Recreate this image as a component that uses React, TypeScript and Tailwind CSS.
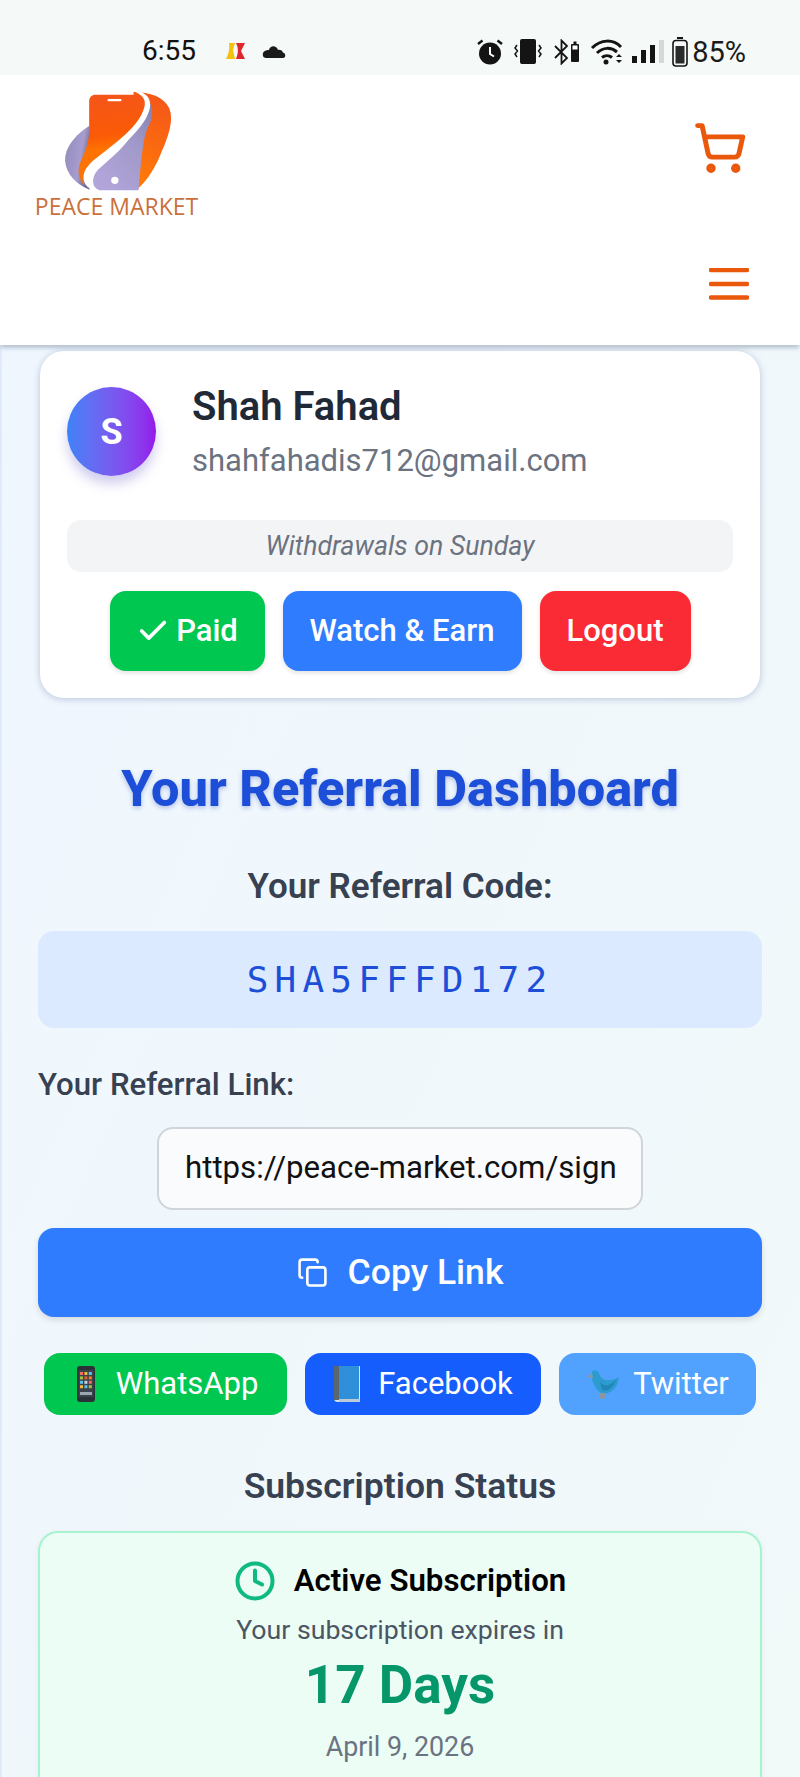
import { Copy, Clock, ShoppingCart, Check } from "lucide-react";

function Logo() {
  return (
    <svg viewBox="120 25 350 315" className="w-[117px] h-[105px] block">
      <defs>
        <linearGradient id="o1" x1="0.3" y1="0" x2="0.4" y2="1">
          <stop offset="0" stopColor="#f4561a" />
          <stop offset="0.45" stopColor="#fb5a06" />
          <stop offset="0.6" stopColor="#ff7300" />
          <stop offset="1" stopColor="#f5740e" />
        </linearGradient>
        <linearGradient id="o2" x1="0.6" y1="0" x2="0.4" y2="1">
          <stop offset="0" stopColor="#f4561a" />
          <stop offset="1" stopColor="#ff7a08" />
        </linearGradient>
        <linearGradient id="p1" x1="0" y1="0" x2="1" y2="0.4">
          <stop offset="0" stopColor="#8f8bbc" />
          <stop offset="0.7" stopColor="#a79ccd" />
          <stop offset="1" stopColor="#6d6a9a" />
        </linearGradient>
        <linearGradient id="p2" x1="0.2" y1="1" x2="0.9" y2="0">
          <stop offset="0" stopColor="#b3a5da" />
          <stop offset="0.6" stopColor="#a099c9" />
          <stop offset="1" stopColor="#8482b3" />
        </linearGradient>
      </defs>
      <path d="M208 138 C165 165 132 205 135 245 C138 285 170 315 208 330 L210 200 Z" fill="url(#p1)" />
      <path d="M340 36 C390 38 430 50 447 85 C462 120 445 170 425 215 C410 255 385 300 352 328 L345 200 Z" fill="url(#o2)" />
      <path d="M384 62 C402 85 398 115 385 140 C368 170 364 240 355 332 L238 332 C215 325 212 295 232 272 C270 235 350 185 384 62 Z" fill="url(#p2)" />
      <path d="M226 45 L345 45 C365 48 378 55 376 75 C368 130 310 180 240 235 C215 255 190 280 192 318 C175 295 170 275 182 245 C195 215 207 190 207 150 L207 65 C207 53 215 45 226 45 Z" fill="url(#o1)" />
      <path d="M325 30 C365 32 392 45 390 78 C385 130 320 190 250 240 C222 262 208 285 212 310 C214 322 222 330 232 336 C210 330 188 318 190 290 C192 265 215 245 240 226 C300 180 365 130 374 75 C376 52 358 38 325 30 Z" fill="#ffffff" />
      <rect x="262" y="58" width="42" height="7" rx="3" fill="#ffffff" />
      <circle cx="284" cy="302" r="11" fill="#ffffff" />
    </svg>
  );
}

function StatusIcons() {
  return (
    <div className="flex items-center text-[#111]">
      <svg viewBox="0 0 26 26" className="w-[26px] h-[26px] mr-[11px]">
        <circle cx="13" cy="14.5" r="11" fill="#141414" />
        <path d="M13 8 V15 L17 17.5" stroke="#fff" strokeWidth="2" fill="none" />
        <path d="M1 5 L5.5 1.5 M25 5 L20.5 1.5" stroke="#141414" strokeWidth="2.4" />
      </svg>
      <svg viewBox="0 0 28 26" className="w-[28px] h-[26px] mr-[12px]">
        <rect x="6" y="0" width="16" height="25" rx="2" fill="#141414" />
        <path d="M3 6 L1 9 L3.5 12 L1 15 L3 18 M25 6 L27 9 L24.5 12 L27 15 L25 18" stroke="#141414" strokeWidth="1.5" fill="none" />
      </svg>
      <svg viewBox="0 0 26 26" className="w-[26px] h-[26px] mr-[10px]">
        <path d="M1 7 L13 19 L7.5 24.5 V1.5 L13 7 L1 19" stroke="#141414" strokeWidth="1.8" fill="none" />
        <rect x="17" y="5" width="8" height="18" rx="1" fill="#141414" />
        <rect x="19.5" y="2.5" width="3" height="3" fill="#141414" />
        <rect x="18.5" y="6.5" width="5" height="4" fill="#fff" />
      </svg>
      <svg viewBox="0 0 34 26" className="w-[34px] h-[26px] mr-[8px]">
        <path d="M2 9 C11 0 23 0 31 8 M7 14 C13 8 21 8 27 13 M12 18.5 C15 16 19 16 22 18.5" stroke="#141414" strokeWidth="3" fill="none" />
        <circle cx="16" cy="23" r="2.5" fill="#141414" />
        <path d="M26 18 L29 15 L32 18 Z M26 21 L29 24 L32 21 Z" fill="#141414" />
      </svg>
      <svg viewBox="0 0 32 24" className="w-[32px] h-[24px] mr-[8px]">
        <rect x="0" y="16" width="5" height="7" fill="#141414" />
        <rect x="9" y="10" width="5" height="13" fill="#141414" />
        <rect x="18" y="5" width="5" height="18" fill="#141414" />
        <rect x="27" y="0" width="5" height="23" fill="#d5d8d6" />
      </svg>
      <svg viewBox="0 0 16 30" className="w-[16px] h-[30px] mr-[4px]">
        <rect x="5" y="0" width="6" height="2" fill="#141414" />
        <rect x="1" y="3.5" width="14" height="25.5" rx="3" stroke="#141414" strokeWidth="1.6" fill="none" />
        <rect x="3.5" y="9" width="9" height="17.5" fill="#2a2a2a" />
      </svg>
      <span className="text-[29px] leading-none text-[#1b1b1b]">85%</span>
    </div>
  );
}

function PhoneEmoji() {
  return (
    <svg viewBox="0 0 26 36" className="w-[26px] h-[36px] shrink-0">
      <rect x="4" y="0" width="18" height="36" rx="3" fill="#2b3137" />
      <rect x="5.5" y="4" width="15" height="27" fill="#3a434b" />
      {[0, 1, 2, 3, 4, 5, 6, 7, 8, 9, 10, 11].map((i) => (
        <rect
          key={i}
          x={7 + (i % 3) * 4.4}
          y={6 + Math.floor(i / 3) * 4.4}
          width="3"
          height="3"
          fill={["#f26d5b", "#f7b733", "#5bc0eb", "#9bc53d", "#e55934", "#fa7921", "#5bc0eb", "#c3d7e0"][i % 8]}
        />
      ))}
      <rect x="7" y="26" width="12" height="3" fill="#9aa7b0" />
    </svg>
  );
}

function BookEmoji() {
  return (
    <svg viewBox="0 0 28 36" className="w-[28px] h-[36px] shrink-0">
      <path d="M3 0 H27 V36 H5 C3 36 1 35 1 33 V3 C1 1 2 0 3 0 Z" fill="#dbe6ee" />
      <rect x="6" y="0" width="20" height="33" fill="#2f8fd8" />
      <rect x="1" y="0" width="5" height="34" fill="#5a6770" />
      <rect x="6" y="33" width="21" height="3" fill="#b9cbd6" />
    </svg>
  );
}

function BirdEmoji() {
  return (
    <svg viewBox="0 0 34 30" className="w-[34px] h-[30px] shrink-0">
      <path d="M6 2 C10 0 13 2 14 7 C18 13 26 12 33 8 C32 18 26 24 18 25 C13 24 8 18 6 10 Z" fill="#2c9bd0" />
      <path d="M14 12 C17 18 23 18 30 11 C27 20 20 23 16 21 Z" fill="#2287b8" />
      <path d="M6 4 L1 8 L7 9 Z" fill="#8b96a0" />
      <path d="M14 24 L20 24 L19 29 L14 30 Z" fill="#8b96a0" />
    </svg>
  );
}

export default function App() {
  return (
    <div
      className="w-[800px] h-[1777px] overflow-hidden flex flex-col bg-gradient-to-br from-[#eff6ff] to-[#f1f9f9]"
      style={{ fontFamily: "Roboto, 'Noto Sans', sans-serif" }}
    >
      {/* status bar */}
      <div className="h-[75px] shrink-0 bg-[#f5f9f7] flex items-end justify-between pb-[8px] pl-[142px] pr-[54px]">
        <div className="flex items-center h-[32px]">
          <span className="text-[28px] leading-none text-[#111] w-[84px]">6:55</span>
          <svg viewBox="0 0 20 17" className="w-[20px] h-[17px] mr-[16px]">
            <path d="M3 0 H9 L7 7 L9 16 H0 C2 12 4 7 3 0 Z" fill="#f4c20d" />
            <path d="M10 0 H19 L15 8 L19 16 H10 C12 11 13 6 10 0 Z" fill="#e0262d" />
          </svg>
          <svg viewBox="0 0 24 14" className="w-[24px] h-[14px]">
            <path d="M5 14 H21 C24 14 24 9 21 8.5 C20 6 17.5 5.5 16 6 C14.5 1 8 1 7 6 C3 6 0 8 1 12 C1.5 13.5 3 14 5 14 Z" fill="#1a1a1a" />
          </svg>
        </div>
        <StatusIcons />
      </div>

      {/* header */}
      <header className="relative z-10 h-[270px] shrink-0 bg-white shadow-[0_4px_4px_-1px_rgba(100,116,139,0.4)] px-[36px] flex justify-between">
        <div className="flex flex-col items-center w-[161px] pt-[13px]">
          <div className="ml-[4px]">
            <Logo />
          </div>
          <span className="mt-[1px] text-[23px] leading-[25px] whitespace-nowrap text-[#c9713c]" style={{ fontFamily: "'Open Sans', sans-serif" }}>
            PEACE MARKET
          </span>
        </div>
        <div className="flex flex-col items-end pr-[15px]">
          <div className="mt-[46px] mr-[2px]">
            <ShoppingCart size={54} color="#ea580c" strokeWidth={2.2} />
          </div>
          <svg viewBox="0 0 40 32" className="w-[40px] h-[32px] mt-[93px]">
            <path d="M2 2 H38 M2 16 H38 M2 29.5 H38" stroke="#ea580c" strokeWidth="4.4" strokeLinecap="round" />
          </svg>
        </div>
      </header>

      <main className="pl-[36px] pr-[38px] border-l-2 border-[#dfeafa] flex flex-col">
        {/* profile card */}
        <section className="mt-[6px] w-[720px] self-center h-[347px] bg-white rounded-[24px] shadow-[0_1px_7px_rgba(110,125,170,0.42)] px-[27px] pt-[36px]">
          <div className="flex">
            <div className="w-[89px] h-[89px] rounded-full bg-gradient-to-r from-[#3b82f6] to-[#9317ea] shadow-[0_8px_12px_rgba(100,90,200,0.3)] flex items-center justify-center text-white text-[36px] font-bold">
              S
            </div>
            <div className="ml-[36px] -mt-[4px]">
              <div className="text-[40px] leading-[48px] font-semibold text-[#1f2937]">Shah Fahad</div>
              <div className="text-[31px] leading-[40px] mt-[10px] text-[#6b7280]">shahfahadis712@gmail.com</div>
            </div>
          </div>
          <div className="mt-[39px] h-[52px] rounded-[14px] bg-[#f3f4f6] flex items-center justify-center italic text-[26.7px] text-[#6b7280]">
            Withdrawals on Sunday
          </div>
          <div className="mt-[19px] flex justify-center gap-[18px]">
            <div className="h-[80px] w-[155px] rounded-[16px] bg-[#00c750] text-white text-[31px] font-medium flex items-center justify-center gap-[6px] shadow-[0_2px_5px_rgba(0,0,0,0.12)]">
              <Check size={34} strokeWidth={2.6} />
              Paid
            </div>
            <div className="h-[80px] w-[239px] rounded-[16px] bg-[#2f7cff] text-white text-[31px] font-medium flex items-center justify-center shadow-[0_2px_5px_rgba(0,0,0,0.12)]">
              Watch &amp; Earn
            </div>
            <div className="h-[80px] w-[151px] rounded-[16px] bg-[#fb2b36] text-white text-[31px] font-medium flex items-center justify-center shadow-[0_2px_5px_rgba(0,0,0,0.12)]">
              Logout
            </div>
          </div>
        </section>

        <h1 className="mt-[59px] text-center text-[50.5px] leading-[64px] font-extrabold text-[#1d4ed8] [text-shadow:0_2px_5px_rgba(30,64,175,0.3)]">
          Your Referral Dashboard
        </h1>

        <div className="mt-[44px] text-center text-[35px] leading-[44px] font-semibold text-[#374151]">Your Referral Code:</div>

        <div className="mt-[22px] h-[97px] rounded-[16px] bg-[#dbeafe] flex items-center justify-center text-[36px] tracking-[6.2px] text-[#1d4ed8]" style={{ fontFamily: "'DejaVu Sans Mono', monospace" }}>
          SHA5FFFD172
        </div>

        <div className="mt-[37px] text-[31.2px] leading-[40px] font-medium text-[#374151]">Your Referral Link:</div>

        <div className="mt-[22px] self-center w-[486px] h-[83px] rounded-[16px] bg-[#fafbfc] border-2 border-[#d1d5db] flex items-center pl-[26px] pr-[26px] overflow-hidden text-[31.2px] text-[#111] whitespace-nowrap">
          https://peace-market.com/sign
        </div>

        <div className="mt-[18px] h-[89px] rounded-[16px] bg-[#2f7cff] text-white text-[35.5px] font-medium flex items-center justify-center gap-[20px] shadow-[0_3px_6px_rgba(0,0,0,0.12)]">
          <Copy size={31} strokeWidth={2} />
          Copy Link
        </div>

        <div className="mt-[36px] flex justify-center gap-[18px]">
          <div className="h-[62px] w-[243px] rounded-[16px] bg-[#00c750] text-white text-[31px] flex items-center justify-center gap-[17px]">
            <PhoneEmoji />
            WhatsApp
          </div>
          <div className="h-[62px] w-[236px] rounded-[16px] bg-[#155dfc] text-white text-[31px] flex items-center justify-center gap-[17px]">
            <BookEmoji />
            Facebook
          </div>
          <div className="h-[62px] w-[197px] rounded-[16px] bg-[#51a2ff] text-white text-[31px] flex items-center justify-center gap-[13px]">
            <BirdEmoji />
            Twitter
          </div>
        </div>

        <div className="mt-[49px] text-center text-[35.5px] leading-[44px] font-semibold text-[#374151]">Subscription Status</div>

        <section className="mt-[23px] h-[300px] rounded-[20px] bg-[#ecfdf5] border-2 border-[#a7f3d0] shadow-[0_2px_8px_rgba(0,0,0,0.05)] flex flex-col items-center pt-[28px]">
          <div className="flex items-center gap-[18px]">
            <Clock size={42} color="#10b981" strokeWidth={2.3} className="-my-[1px]" />
            <span className="text-[31.2px] leading-[40px] font-semibold text-black">Active Subscription</span>
          </div>
          <div className="mt-[11px] text-[26.7px] leading-[36px] text-[#4b5563]">Your subscription expires in</div>
          <div className="mt-[3px] text-[53px] leading-[68px] font-bold text-[#059669]">17 Days</div>
          <div className="mt-[10px] text-[26.8px] leading-[36px] text-[#6b7280]">April 9, 2026</div>
        </section>
      </main>
    </div>
  );
}
